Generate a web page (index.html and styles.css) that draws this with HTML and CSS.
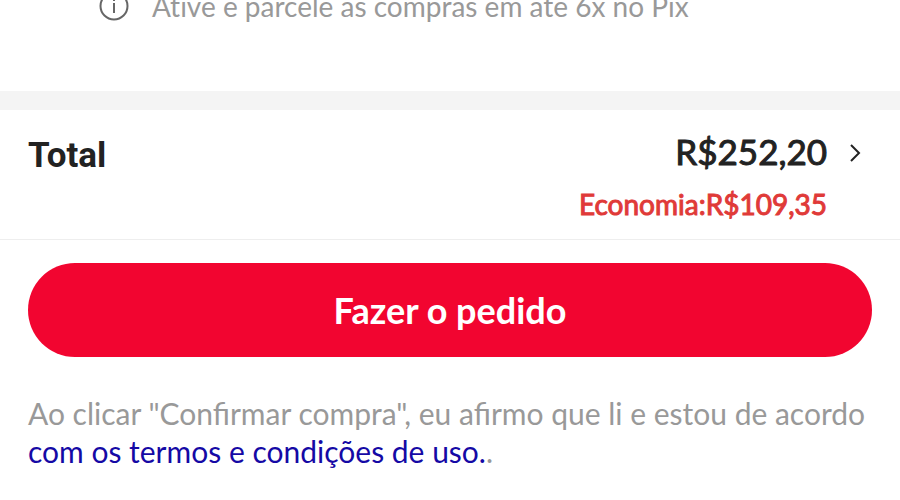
FILE: index.html
```html
<!DOCTYPE html>
<html lang="pt-BR">
<head>
<meta charset="utf-8">
<meta name="viewport" content="width=device-width, initial-scale=1">
<title>Finalizar compra</title>
<link rel="stylesheet" href="styles.css">
</head>
<body>
<main class="checkout">
  <section class="payment">
    <svg class="info-icon" viewBox="0 0 30 30" aria-hidden="true">
      <circle cx="15" cy="15" r="13.5"/>
      <path d="M15 12v10M15 8v2"/>
    </svg>
    <p class="payment-text">Ative e parcele as compras em até 6x no Pix</p>
  </section>
  <section class="summary">
    <h2 class="total-label">Total</h2>
    <div class="amounts">
      <p class="total">R$252,20</p>
      <p class="savings">Economia:R$109,35</p>
    </div>
    <button class="details" type="button" aria-label="Ver detalhes">
      <svg class="chevron" viewBox="0 0 12 18" aria-hidden="true"><path d="M2 1l8 8-8 8"/></svg>
    </button>
  </section>
  <footer class="actions">
    <button class="order" type="button">Fazer o pedido</button>
    <p class="terms">Ao clicar "Confirmar compra", eu afirmo que li e estou de acordo <a class="terms-link" href="#termos">com os termos e condições de uso.</a>.</p>
  </footer>
</main>
</body>
</html>
```
FILE: styles.css
```css
* {
  box-sizing: border-box;
}

body {
  margin: 0;
  background: #fff;
  color: #222;
  font-family: Lato, "Open Sans", sans-serif;
}

h2,
p {
  margin: 0;
}

svg {
  display: block;
  fill: none;
  stroke: currentColor;
}

.checkout {
  overflow: hidden;
}

.payment {
  display: flex;
  align-items: center;
  gap: 23px;
  margin-top: -12px;
  padding: 0 99px 67px;
  border-bottom: 19px solid #f4f4f4;
  color: #999;
}

.info-icon {
  width: 30px;
  height: 30px;
  color: #666;
  stroke-width: 2;
}

.payment-text {
  font-size: 28px;
  font-variant-ligatures: none;
  line-height: 36px;
}

.summary {
  display: flex;
  align-items: flex-start;
  padding: 20px 30px 17px 28px;
  border-bottom: 1px solid #eee;
}

.total-label {
  font: 700 35px/52px Roboto, sans-serif;
}

.amounts {
  margin-left: auto;
  text-align: right;
  -webkit-text-stroke: 1px currentColor;
}

.total {
  font-size: 35px;
  line-height: 42px;
}

.savings {
  margin-top: 14px;
  color: #e03a38;
  font-size: 28px;
  line-height: 36px;
}

.details {
  padding: 14px 9px 14px 22px;
  border: 0;
  background: none;
  color: #222;
}

.chevron {
  width: 12px;
  height: 18px;
  stroke-width: 2;
}

.actions {
  padding: 23px 28px;
}

.order {
  width: 100%;
  padding: 24px;
  border: 0;
  border-radius: 48px;
  background: #f20530;
  color: #fff;
  font: 700 36px/46px Lato, sans-serif;
}

.terms {
  margin-top: 37px;
  color: #999;
  font-size: 30px;
  line-height: 38px;
}

.terms-link {
  color: #1509a5;
  text-decoration: none;
}
```
